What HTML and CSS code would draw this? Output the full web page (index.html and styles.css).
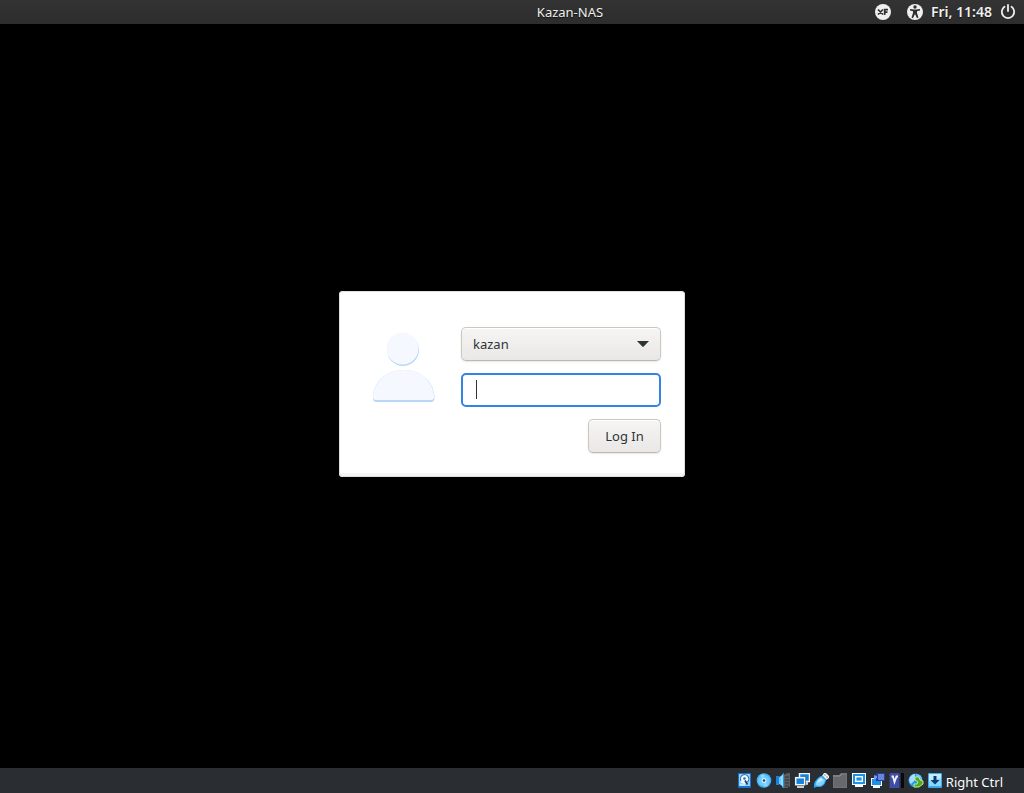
FILE: index.html
```html
<!DOCTYPE html>
<html lang="en">
<head>
<meta charset="utf-8">
<title>Kazan-NAS</title>
<link rel="stylesheet" href="styles.css">
</head>
<body>
<header class="panel">
  <div class="hostname">Kazan-NAS</div>
  <div class="indicators">
    <button class="indicator session" aria-label="Session">
      <svg width="16" height="16" viewBox="0 0 16 16"><circle cx="8" cy="8" r="8" fill="#efefef"/><path d="M3 5.5L8 10.5M3 10.5L8 5.5M9.7 11V5.7H13M9.7 8.2H12.5" fill="none" stroke="#303030" stroke-width="1.7"/></svg>
    </button>
    <button class="indicator" aria-label="Accessibility">
      <svg width="16" height="16" viewBox="0 0 16 16"><circle cx="8" cy="8" r="8" fill="#efefef"/><circle cx="8" cy="3" r="1.7" fill="#303030"/><path d="M3 5L7 5.4H9L13 5V6.6L10 7.3V9L11.5 13.5L10 14.2L8.3 10.5H7.7L6 14.2L4.5 13.5L6 9V7.3L3 6.6Z" fill="#303030"/></svg>
    </button>
    <time class="clock">Fri, 11:48</time>
    <button class="indicator" aria-label="Power">
      <svg width="16" height="16" viewBox="0 0 16 16"><path d="M4.5 2.8A6.2 6.2 0 1 0 11.5 2.8M8 1V7" fill="none" stroke="#efefef" stroke-width="1.8" stroke-linecap="round"/></svg>
    </button>
  </div>
</header>
<main class="screen">
  <form class="login">
    <svg class="avatar" width="80" height="80" viewBox="0 0 80 80" aria-hidden="true">
      <circle cx="40" cy="23" r="16" fill="#b9d8f7"/>
      <circle cx="39.5" cy="21.5" r="16" fill="#f5f9ff"/>
      <path d="M10 71C10 54 24 43 41 43S71 54 71.5 71Q71.5 75 68 75H13Q10 75 10 71Z" fill="#b9d8f7"/>
      <path d="M10 70C11 54 24 43 41 43S70 54 71 70Q71 73 68 73H13Q10 73 10 70Z" fill="#f5f9ff"/>
    </svg>
    <div class="fields">
      <div class="user-picker">
        <select class="user" aria-label="User"><option>kazan</option></select>
        <svg class="arrow" width="12" height="6" viewBox="0 0 12 6" aria-hidden="true"><path d="M0 0H12L6.5 5.7H5.5Z" fill="#2e3436"/></svg>
      </div>
      <input class="password" type="password" aria-label="Password">
      <button class="submit" type="button">Log In</button>
    </div>
  </form>
</main>
<footer class="status">
  <div class="devices" aria-hidden="true">
    <svg width="16" height="16" viewBox="0 0 16 16"><rect x="1" y="0" width="13" height="15" rx="1" fill="#1773cf"/><rect x="2" y="1" width="11" height="12" fill="#8fd2ff"/><circle cx="7.5" cy="6" r="4.8" fill="#f2fbff"/><path d="M4 8A4.2 4.2 0 1 1 10 9.3" fill="none" stroke="#2a70b8" stroke-width="1.2"/><circle cx="7.5" cy="5.5" r="1.3" fill="#2a70b8"/><path d="M8 7.5L10.5 11.5" stroke="#123e70" stroke-width="1.6"/><path d="M3 12H8" stroke="#f2fbff"/></svg>
    <svg width="16" height="16" viewBox="0 0 16 16"><circle cx="8" cy="7.5" r="7.3" fill="#3fb1f3"/><circle cx="8" cy="7.5" r="5.8" fill="#6fcaff"/><path d="M8 7.5L4 2.5A6 6 0 0 1 8 1.2ZM8 7.5L12 12.5A6 6 0 0 1 8 13.8Z" fill="#88d7ff"/><circle cx="8" cy="7.5" r="2.5" fill="#c9efff"/><circle cx="8" cy="7.5" r="1.2" fill="#0c4f87"/></svg>
    <svg width="16" height="16" viewBox="0 0 16 16"><path d="M8 2L13 0H15V14H13V15H7V2Z" fill="#5c5f61"/><path d="M10 4H14M10 7H14M10 10H14M10 13H14" stroke="#303437"/><rect x="1" y="3" width="3" height="9" fill="#1782dc"/><path d="M4 4L6 3V12L4 11Z" fill="#6ccaff"/><path d="M6 3L9 0V15L6 12Z" fill="#93dcff"/><path d="M8.5 0V15" stroke="#2f91dd"/></svg>
    <svg width="16" height="16" viewBox="0 0 16 16"><rect x="5.5" y=".5" width="10" height="8" fill="#1782dc" stroke="#f1f6f8" stroke-width="1.5"/><path d="M11 11H14M13 9V11" stroke="#d8e4eb" stroke-width="1.5"/><rect x="1" y="4" width="11" height="9" fill="#25292c"/><rect x="1.7" y="4.7" width="9" height="7" fill="#1782dc" stroke="#f1f6f8" stroke-width="1.5"/><path d="M3 14H10" stroke="#f1f6f8" stroke-width="1.6"/></svg>
    <svg width="16" height="16" viewBox="0 0 16 16"><path d="M9 3L11 0H13L16 3V5L13 7Z" fill="#f1f1f1"/><path d="M11.5 2H12.5M13.5 4H14.5" stroke="#444"/><path d="M8 3L10 3L13 6V8Q11 14 6 14L3 14L1 15V12C1 9 4 5 8 3Z" fill="#31a4ef"/><path d="M8 4Q3 7 2.5 12L5 13Q11 13 12 7Z" fill="#83d5ff"/><path d="M8 5Q4 8 4 10L10 7Z" fill="#c6eeff"/></svg>
    <svg width="16" height="16" viewBox="0 0 16 16"><path d="M1 2H7L9 0H15V15H1Z" fill="#707275"/><path d="M2 4H8L10 2H14V14H2Z" fill="#66686b"/><path d="M1 3H8L10 1" fill="none" stroke="#8b8c8e"/></svg>
    <svg width="16" height="16" viewBox="0 0 16 16"><path d="M1 0H15V12H12V14H4V12H1Z" fill="#f4fbff"/><rect x="2" y="1" width="12" height="10" fill="#1b91e8"/><rect x="4.7" y="3.7" width="6.6" height="4.6" fill="#1b91e8" stroke="#fff" stroke-width="1.4"/></svg>
    <svg width="16" height="16" viewBox="0 0 16 16"><path d="M1 5H12V13H10V15H3V13H1Z" fill="#f4fbff"/><rect x="2" y="6" width="9" height="6" fill="#1b91e8"/><rect x="6" y="0" width="9" height="8" fill="#263d9b"/><rect x="8" y="1" width="6" height="6" fill="#6685dc"/><path d="M4 2L7 3V5L4 7Z" fill="#7896ed"/></svg>
    <svg width="16" height="16" viewBox="0 0 16 16"><path d="M0 2H11M0 5H11M0 8H11M0 11H11M0 14H11" stroke="#4658b5"/><rect x="1" y="0" width="9" height="15" fill="#3e4ea8"/><path d="M2.5 3.5H4L5.5 9L7.5 3.5H9" fill="none" stroke="#f1f3ff" stroke-width="1.8"/><rect x="12" y="0" width="3" height="15" fill="#08090a"/></svg>
    <svg width="16" height="16" viewBox="0 0 16 16"><circle cx="7.5" cy="7.5" r="7" fill="#239be9"/><path d="M2 4Q4 1 7 1L7 7L3 11Q0 8 2 4Z" fill="#a3e0ff"/><path d="M8 1Q14 1 14 7H9Z" fill="#68c8fb"/><path d="M7 4H11L12 7L15 8L15 11L11 14H6V11H9L10 9L7 7Z" fill="#54a91e" stroke="#b9e899"/></svg>
    <svg width="16" height="16" viewBox="0 0 16 16"><rect x="1" y="0" width="14" height="15" rx="1" fill="#39aaf1"/><rect x="2" y="1" width="12" height="12" fill="#8dd5ff"/><path d="M2 1H14V5L2 8Z" fill="#c3ecff"/><path d="M6.5 3H9.5V7H12.5L8 11.5L3.5 7H6.5Z" fill="#0b3c70"/></svg>
  </div>
  <span class="host-key">Right Ctrl</span>
</footer>
</body>
</html>
```
FILE: styles.css
```css
* { box-sizing: border-box; }
body {
  margin: 0;
  min-height: 100vh;
  display: flex;
  flex-direction: column;
  background: #000;
  font: 14px/20px "Noto Sans", sans-serif;
}
svg { display: block; }
button, input, select { font: inherit; }
.panel {
  height: 24px;
  display: grid;
  grid-template-columns: 1fr auto 1fr;
  align-items: center;
  padding-right: 8px;
  background: linear-gradient(#333, #2d2d2d);
  color: #efefef;
  font-size: 13px;
  text-shadow: 0 1px 1px #111;
}
.hostname { grid-column: 2; margin-left: 124px; }
.indicators {
  display: flex;
  align-items: center;
  justify-content: flex-end;
  gap: 8px;
}
.indicator { padding: 0; border: 0; background: none; }
.session { margin-right: 8px; }
.clock { font-size: 14px; font-weight: 600; white-space: nowrap; }
.screen {
  flex: 1;
  display: flex;
  align-items: center;
  justify-content: center;
  padding-bottom: 24px;
}
.login {
  display: flex;
  gap: 18px;
  padding: 36px 24px 24px;
  background: #fff;
  border-radius: 4px;
  box-shadow: inset 0 0 0 1px #deddda, inset 0 -4px #f6f5f3;
}
.fields {
  width: 200px;
  display: flex;
  flex-direction: column;
  gap: 12px;
}
.user-picker { position: relative; }
.user, .submit {
  height: 34px;
  border: 1px solid #cdc7c2;
  border-bottom-color: #bfb8b1;
  border-radius: 5px;
  background: linear-gradient(#f6f5f4, #eae8e7);
  box-shadow: inset 0 1px #fff, 0 1px 2px #0000001a;
  color: #2e3436;
  font-size: 13px;
}
.user {
  display: block;
  width: 100%;
  padding: 0 11px;
  appearance: none;
}
.arrow {
  position: absolute;
  right: 12px;
  top: 14px;
  pointer-events: none;
}
.password {
  width: 100%;
  height: 34px;
  padding: 0 14px;
  border: 2px solid #3584e4;
  border-radius: 5px;
  outline: 0;
  background: linear-gradient(#2e3436, #2e3436) 13px 5px / 1px 19px no-repeat #fff;
}
.submit { align-self: flex-end; min-width: 73px; padding: 0 16px; }
.status {
  height: 25px;
  display: flex;
  align-items: center;
  justify-content: flex-end;
  gap: 3px;
  padding-right: 21px;
  background: #2a2e32;
  color: #fcfcfc;
}
.devices { display: flex; gap: 3px; }
.host-key { font-size: 13px; line-height: 20px; padding-top: 2px; }
```
